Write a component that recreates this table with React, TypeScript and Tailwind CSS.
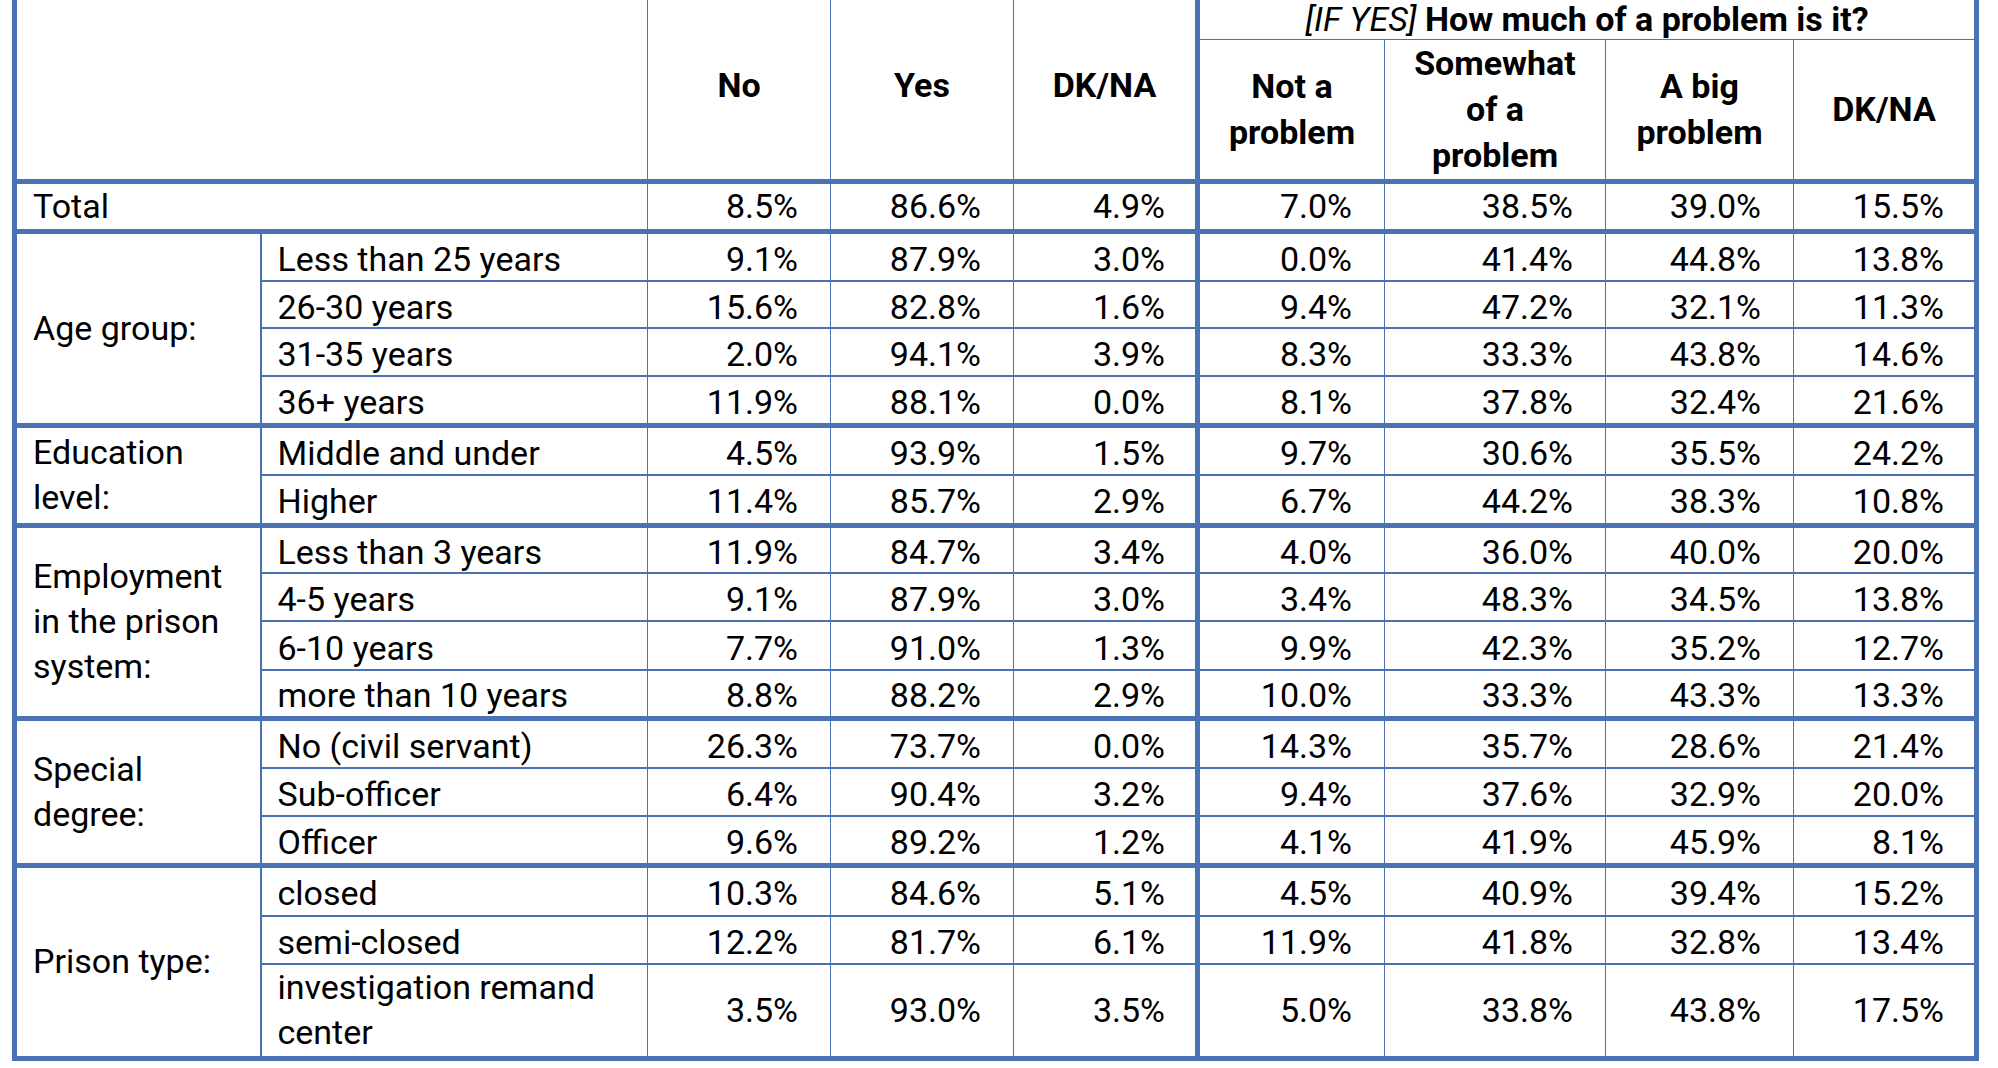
type Row = { label: string; h: number; values: string[] }
type Group = { name: string; rows: Row[] }

const TOTAL = ['8.5%', '86.6%', '4.9%', '7.0%', '38.5%', '39.0%', '15.5%']

const GROUPS: Group[] = [
  {
    name: 'Age group:',
    rows: [
      { label: 'Less than 25 years', h: 50, values: ['9.1%', '87.9%', '3.0%', '0.0%', '41.4%', '44.8%', '13.8%'] },
      { label: '26-30 years', h: 47, values: ['15.6%', '82.8%', '1.6%', '9.4%', '47.2%', '32.1%', '11.3%'] },
      { label: '31-35 years', h: 48, values: ['2.0%', '94.1%', '3.9%', '8.3%', '33.3%', '43.8%', '14.6%'] },
      { label: '36+ years', h: 49, values: ['11.9%', '88.1%', '0.0%', '8.1%', '37.8%', '32.4%', '21.6%'] },
    ],
  },
  {
    name: 'Education level:',
    rows: [
      { label: 'Middle and under', h: 50, values: ['4.5%', '93.9%', '1.5%', '9.7%', '30.6%', '35.5%', '24.2%'] },
      { label: 'Higher', h: 50, values: ['11.4%', '85.7%', '2.9%', '6.7%', '44.2%', '38.3%', '10.8%'] },
    ],
  },
  {
    name: 'Employment in the prison system:',
    rows: [
      { label: 'Less than 3 years', h: 48, values: ['11.9%', '84.7%', '3.4%', '4.0%', '36.0%', '40.0%', '20.0%'] },
      { label: '4-5 years', h: 48, values: ['9.1%', '87.9%', '3.0%', '3.4%', '48.3%', '34.5%', '13.8%'] },
      { label: '6-10 years', h: 49, values: ['7.7%', '91.0%', '1.3%', '9.9%', '42.3%', '35.2%', '12.7%'] },
      { label: 'more than 10 years', h: 48, values: ['8.8%', '88.2%', '2.9%', '10.0%', '33.3%', '43.3%', '13.3%'] },
    ],
  },
  {
    name: 'Special degree:',
    rows: [
      { label: 'No (civil servant)', h: 50, values: ['26.3%', '73.7%', '0.0%', '14.3%', '35.7%', '28.6%', '21.4%'] },
      { label: 'Sub-officer', h: 48, values: ['6.4%', '90.4%', '3.2%', '9.4%', '37.6%', '32.9%', '20.0%'] },
      { label: 'Officer', h: 49, values: ['9.6%', '89.2%', '1.2%', '4.1%', '41.9%', '45.9%', '8.1%'] },
    ],
  },
  {
    name: 'Prison type:',
    rows: [
      { label: 'closed', h: 51, values: ['10.3%', '84.6%', '5.1%', '4.5%', '40.9%', '39.4%', '15.2%'] },
      { label: 'semi-closed', h: 48, values: ['12.2%', '81.7%', '6.1%', '11.9%', '41.8%', '32.8%', '13.4%'] },
      { label: 'investigation remand center', h: 94, values: ['3.5%', '93.0%', '3.5%', '5.0%', '33.8%', '43.8%', '17.5%'] },
    ],
  },
]

const COLS = [246, 387, 183, 183, 184, 187, 221, 188, 183]

// column 2 (first DK/NA) carries the thick divider before the follow-up block
function numClass(i: number, lastInGroup: boolean, single: boolean) {
  const right = i === 2 ? 'border-r-[5px] pr-[30px]' : i === 6 ? 'pr-[30px]' : 'border-r pr-[32px]'
  const bottom = lastInGroup ? 'border-b-[5px]' : 'border-b-2'
  const nudge = single ? 'pt-[4px] leading-[40px]' : ''
  return `border-[#4a72b5] text-right align-middle whitespace-nowrap ${right} ${bottom} ${nudge}`
}

export default function App() {
  return (
    <div className="w-[1998px] h-[1068px] overflow-hidden bg-white">
      <table className="ml-[12px] w-[1967px] table-fixed border-collapse border-x-[5px] border-b-[5px] border-[#4a72b5] font-['Roboto',Arial,sans-serif] text-[34px] leading-[45px] text-black">
        <colgroup>
          {COLS.map((w, i) => (
            <col key={i} style={{ width: w }} />
          ))}
        </colgroup>
        <thead>
          <tr className="h-[39px]">
            <th colSpan={2} rowSpan={2} className="border-r border-b-[5px] border-[#4a72b5]" />
            <th rowSpan={2} className="border-r border-b-[5px] border-[#4a72b5] pb-2 text-center align-middle font-bold">
              No
            </th>
            <th rowSpan={2} className="border-r border-b-[5px] border-[#4a72b5] pb-2 text-center align-middle font-bold">
              Yes
            </th>
            <th rowSpan={2} className="border-r-[5px] border-b-[5px] border-[#4a72b5] pb-2 text-center align-middle font-bold">
              DK/NA
            </th>
            <th colSpan={4} className="border-b border-[#4a72b5] text-center align-middle leading-[38px] whitespace-nowrap font-normal">
              <span className="italic">[IF YES]</span> <span className="font-bold">How much of a problem is it?</span>
            </th>
          </tr>
          <tr className="h-[142px] leading-[46px]">
            <th className="border-r border-b-[5px] border-[#4a72b5] text-center align-middle font-bold">
              Not a<br />problem
            </th>
            <th className="border-r border-b-[5px] border-[#4a72b5] text-center align-middle font-bold">
              Somewhat<br />of a<br />problem
            </th>
            <th className="border-r border-b-[5px] border-[#4a72b5] text-center align-middle font-bold">
              A big<br />problem
            </th>
            <th className="border-b-[5px] border-[#4a72b5] text-center align-middle font-bold">DK/NA</th>
          </tr>
        </thead>
        <tbody>
          <tr className="h-[50px]">
            <td colSpan={2} className="border-r border-b-[5px] border-[#4a72b5] pl-4 align-middle">
              Total
            </td>
            {TOTAL.map((v, i) => (
              <td key={i} className={numClass(i, true, false)}>
                {v}
              </td>
            ))}
          </tr>
          {GROUPS.map((g) =>
            g.rows.map((r, ri) => {
              const last = ri === g.rows.length - 1
              const single = r.h < 90
              return (
                <tr key={g.name + r.label} style={{ height: r.h }}>
                  {ri === 0 && (
                    <td
                      rowSpan={g.rows.length}
                      className="border-r-2 border-b-[5px] border-[#4a72b5] pl-4 pr-3 align-middle"
                    >
                      {g.name}
                    </td>
                  )}
                  <td
                    className={`border-r border-[#4a72b5] pl-4 pr-3 align-middle ${last ? 'border-b-[5px]' : 'border-b-2'} ${single ? 'pt-[4px] leading-[40px]' : ''}`}
                  >
                    {r.label}
                  </td>
                  {r.values.map((v, i) => (
                    <td key={i} className={numClass(i, last, single)}>
                      {v}
                    </td>
                  ))}
                </tr>
              )
            })
          )}
        </tbody>
      </table>
    </div>
  )
}
